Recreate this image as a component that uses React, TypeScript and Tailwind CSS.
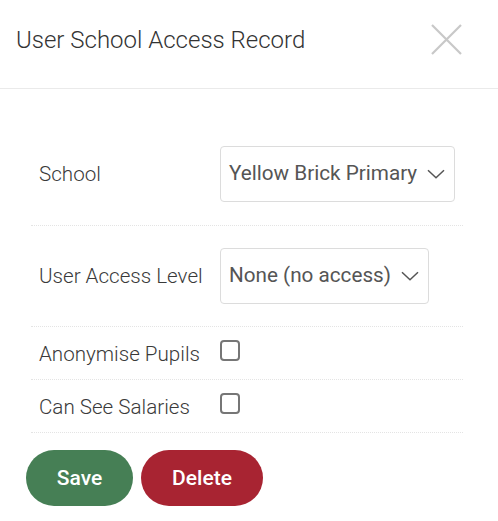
import React from "react";

function Chevron() {
  return (
    <svg width="18" height="10" viewBox="0 0 18 10" fill="none" className="ml-[10px] shrink-0">
      <path d="M1 1.2 L9 8.8 L17 1.2" stroke="#555" strokeWidth="1.5" />
    </svg>
  );
}

function Select({ value }: { value: string }) {
  return (
    <div className="inline-flex h-[56px] items-center rounded-[4px] border border-[#dcdcdc] bg-white pl-[8px] pr-[9px] text-[20.7px] text-[#555]">
      <span className="whitespace-nowrap">{value}</span>
      <Chevron />
    </div>
  );
}

function Checkbox() {
  return <div className="h-[21px] w-[20px] rounded-[4px] border-2 border-[#767676] bg-white" />;
}

export default function App() {
  return (
    <div
      className="h-[521px] w-[498px] bg-white"
      style={{ fontFamily: "Roboto, 'Liberation Sans', sans-serif" }}
    >
      <div className="flex h-[89px] items-center justify-between border-b border-[#eaeaea] pl-[16px] pr-[36px]">
        <h1 className="text-[24px] font-light text-[#333] -mt-[8px]">User School Access Record</h1>
        <svg width="31" height="31" viewBox="0 0 31 31" className="-mt-[9px]">
          <path d="M1 1 L30 30 M30 1 L1 30" stroke="#c8c8c8" strokeWidth="2.2" />
        </svg>
      </div>
      <div className="pl-[31px] pr-[35px] pt-[34px]">
        <div className="flex items-center border-b border-dotted border-[#e4e4e4] py-[23px]">
          <div className="w-[189px] pl-[8px] text-[20.6px] font-light text-[#3a3a3a]">School</div>
          <Select value="Yellow Brick Primary" />
        </div>
        <div className="flex items-center border-b border-dotted border-[#e4e4e4] py-[22px]">
          <div className="w-[189px] pl-[8px] text-[20.6px] font-light text-[#3a3a3a]">User Access Level</div>
          <Select value="None (no access)" />
        </div>
        <div className="flex h-[53px] items-center border-b border-dotted border-[#e4e4e4]">
          <div className="w-[189px] pl-[8px] pt-[2px] text-[20.6px] font-light text-[#3a3a3a]">Anonymise Pupils</div>
          <div className="-mt-[6px]">
            <Checkbox />
          </div>
        </div>
        <div className="flex h-[53px] items-center border-b border-dotted border-[#e4e4e4]">
          <div className="w-[189px] pl-[8px] pt-[2px] text-[20.6px] font-light text-[#3a3a3a]">Can See Salaries</div>
          <div className="-mt-[6px]">
            <Checkbox />
          </div>
        </div>
      </div>
      <div className="flex gap-[8px] pl-[26px] pt-[17px]">
        <button className="h-[56px] w-[107px] rounded-full bg-[#467f55] pt-[2px] text-[21px] font-medium text-white">
          Save
        </button>
        <button className="h-[56px] w-[122px] rounded-full bg-[#a82432] pt-[2px] text-[21px] font-medium text-white">
          Delete
        </button>
      </div>
    </div>
  );
}
